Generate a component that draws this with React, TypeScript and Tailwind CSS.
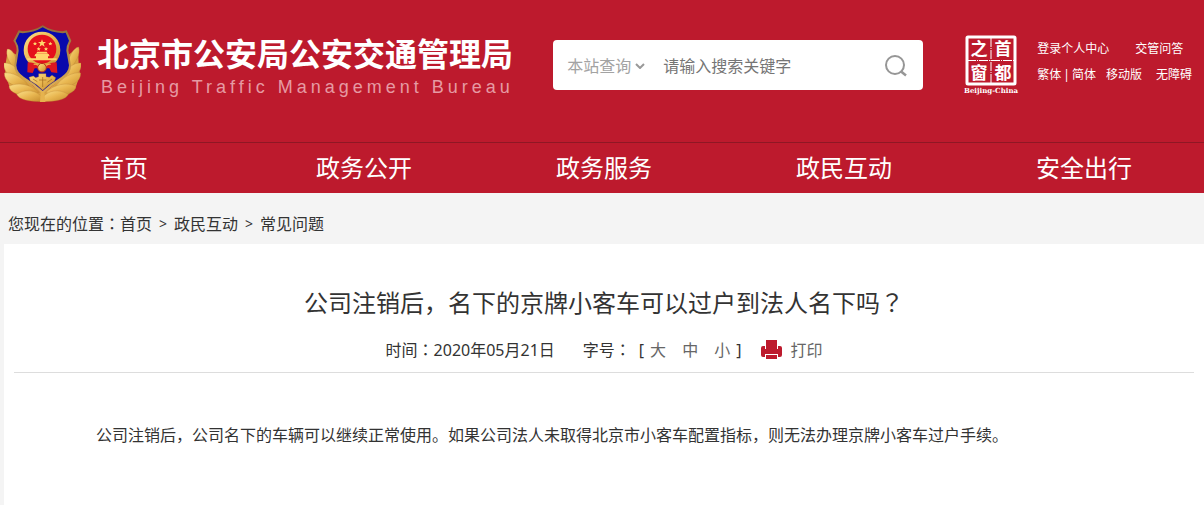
import { useState } from 'react';

const navItems = ['首页', '政务公开', '政务服务', '政民互动', '安全出行'];
const crumbs = ['首页', '政民互动', '常见问题'];
const sizes = ['大', '中', '小'];

function PoliceEmblem() {
  return (
    <svg viewBox="12 30 231 231" className="size-[77px] shrink-0" role="img" aria-label="警徽">
      <defs>
        <linearGradient id="gold" x1="0" y1="0" x2="1" y2="1">
          <stop offset="0" stopColor="#fbe08a" />
          <stop offset="0.5" stopColor="#e8b650" />
          <stop offset="1" stopColor="#c48a2c" />
        </linearGradient>
        <linearGradient id="rim" x1="0" y1="0" x2="0" y2="1">
          <stop offset="0" stopColor="#8d6a3c" />
          <stop offset="1" stopColor="#e4b656" />
        </linearGradient>
      </defs>
      <path d="M24 104 L50 120 L70 190 L128 236 L186 190 L205 120 L234 98 L236 150 L240 180 L226 220 L200 242 L128 259 L56 242 L30 220 L16 178 L16 150Z" fill="#d9a343" />
      <g fill="url(#gold)" stroke="#b98130" strokeWidth="1">
        <path d="M50 166 C26 144 16 120 22 102 C38 102 48 124 54 152Z" />
        <path d="M62 200 C28 186 8 168 12 144 C34 142 56 160 68 188Z" />
        <path d="M78 222 C38 214 12 200 13 174 C38 170 70 188 88 214Z" />
        <path d="M100 240 C62 244 30 236 27 214 C54 200 92 208 118 232Z" />
        <path d="M124 260 C90 260 56 254 50 238 C78 220 110 226 128 248Z" />
        <path d="M205 166 C229 144 242 116 236 96 C220 98 207 124 201 152Z" />
        <path d="M193 200 C227 186 247 168 243 144 C221 142 199 160 187 188Z" />
        <path d="M177 222 C217 214 243 200 242 174 C217 170 185 188 167 214Z" />
        <path d="M155 240 C193 244 225 236 228 214 C201 200 163 208 137 232Z" />
        <path d="M131 260 C165 260 199 254 205 238 C177 220 145 226 127 248Z" />
      </g>
      <path d="M128 31 Q154 48 188 49 L200 46 L214 77 Q205 90 205 106 L213 151 Q214 176 188 192 Q154 212 128 238 Q102 212 68 192 Q42 176 43 151 L50 106 Q50 90 40 77 L56 46 L68 49 Q102 48 128 31Z" fill="url(#rim)" />
      <path d="M128 37 Q154 53 188 55 L197 53 L207 77 Q199 91 199 107 L207 151 Q206 172 184 186 Q152 205 128 228 Q104 205 72 186 Q50 172 49 151 L56 107 Q56 91 47 77 L59 53 L68 55 Q102 53 128 37Z" fill="#0909ac" />
      <circle cx="126" cy="105" r="55" fill="url(#gold)" />
      <circle cx="126" cy="102" r="43" fill="#e5101b" />
      <g fill="#ffd66b">
        <path d="M126 73 l3 8 9 0 -7 5 3 9 -8 -5 -8 5 3 -9 -7 -5 9 0Z" />
        <path d="M105 80 l2 4 4 0 -3 3 1 4 -4 -2 -4 2 1 -4 -3 -3 4 0Z" />
        <path d="M151 80 l2 4 4 0 -3 3 1 4 -4 -2 -4 2 1 -4 -3 -3 4 0Z" />
        <path d="M116 96 l2 4 4 0 -3 3 1 4 -4 -2 -4 2 1 -4 -3 -3 4 0Z" />
        <path d="M138 96 l2 4 4 0 -3 3 1 4 -4 -2 -4 2 1 -4 -3 -3 4 0Z" />
        <path d="M112 110 H140 L144 116 H108Z M106 117 H146 L149 124 H144 V130 H170 V136 H82 V130 H108 V124 H103Z" />
      </g>
      <path d="M83 142 Q104 142 112 150 H140 Q150 142 170 142 L172 174 L154 172 L148 160 H104 L98 174 L82 172Z" fill="#dc1721" />
      <path d="M101 148 Q112 146 116 154 H137 Q142 146 152 148" fill="none" stroke="#f0b245" strokeWidth="4" />
      <circle cx="126" cy="158" r="13" fill="url(#gold)" stroke="#b52418" strokeWidth="3" />
      <path d="M87 187 L100 183 L107 188 L116 185 V176 H138 V185 L148 187 L156 181 L167 188 L163 198 Q143 210 128 226 Q112 208 91 197Z" fill="url(#gold)" stroke="#b87d24" />
      <path d="M99 192 L112 200 M156 192 L142 202 M128 186 V216 M117 195 H139" stroke="#9d671b" strokeWidth="2" />
      <path d="M122 232 L133 232 L136 261 H120Z" fill="#e6b34e" />
    </svg>
  );
}

function CapitalWindowLogo() {
  return (
    <svg viewBox="0 0 58 60" className="h-[60px] w-[58px]" role="img" aria-label="首都之窗">
      <rect x="4" y="2" width="48" height="47" rx="1" fill="none" stroke="#fff" strokeWidth="3" />
      <path d="M28 3 V49 M4 25.500 H52" stroke="#fff" strokeWidth="1" strokeDasharray="9 1 1 1" />
      <g fill="#fff" fontFamily="'Noto Sans CJK SC', sans-serif" fontSize="17" fontWeight="700" textAnchor="middle">
        <text x="16" y="20">之</text>
        <text x="40" y="20">首</text>
        <text x="16" y="44">窗</text>
        <text x="40" y="44">都</text>
      </g>
      <text x="28" y="58" fill="#fff" fontFamily="'DejaVu Serif', serif" fontSize="7" fontWeight="700" textAnchor="middle">
        Beijing-China
      </text>
    </svg>
  );
}

function SearchBox() {
  return (
    <form
      className="flex h-[50px] w-[370px] shrink-0 items-center rounded-[4px] bg-white pt-0.5 pr-4 pl-3.5 text-base"
      onSubmit={(e) => e.preventDefault()}
    >
      <div className="relative flex items-center">
        <select aria-label="查询范围" className="w-20 appearance-none bg-transparent text-[#a3a3a3] outline-none">
          <option>本站查询</option>
        </select>
        <svg viewBox="0 0 10 6" className="pointer-events-none absolute right-0.5 h-1.5 w-2.5" fill="none" stroke="#999" strokeWidth="2">
          <path d="M1 1 L5 5 L9 1" />
        </svg>
      </div>
      <input
        type="text"
        aria-label="搜索关键字"
        placeholder="请输入搜索关键字"
        className="ml-4 min-w-0 flex-1 bg-transparent outline-none placeholder:text-[#757575]"
      />
      <button type="submit" aria-label="搜索">
        <svg viewBox="0 0 22 22" className="size-[22px]" fill="none" stroke="#969696" strokeWidth="2">
          <circle cx="10" cy="10" r="9" />
          <path d="M15.500 16 L21 20.500" strokeWidth="2.500" />
        </svg>
      </button>
    </form>
  );
}

/* Full-width punctuation set in the middle of its cell */
function Mark({ children }: { children: string }) {
  return <span className="font-['Noto_Sans_CJK_TC',sans-serif]">{children}</span>;
}

export default function App() {
  const [size, setSize] = useState('中');
  const bodySize = size === '大' ? 'text-lg' : size === '小' ? 'text-sm' : 'text-base';
  return (
    <div className="min-h-screen bg-[#f4f4f4] font-['Noto_Sans','Noto_Sans_CJK_SC',sans-serif] text-[#333]">
      <header className="bg-[#bd1a2d] text-white">
        <div className="flex h-[142px] items-start pt-[25px] pr-3 pl-1">
          <PoliceEmblem />
          <div className="ml-4 shrink-0 pt-2">
            <h1 className="text-[32px] leading-[42px] font-bold">北京市公安局公安交通管理局</h1>
            <p className="pl-1 font-['Liberation_Sans',sans-serif] text-lg leading-6 tracking-[4px] text-[#e69aa3]">
              Beijing Traffic Management Bureau
            </p>
          </div>
          <div className="ml-auto flex items-start">
            <div className="pt-[15px]">
              <SearchBox />
            </div>
            <a href="#capital" className="ml-10 shrink-0 pt-2.5">
              <CapitalWindowLogo />
            </a>
            <div className="ml-4 flex shrink-0 flex-col gap-2 pt-[15px] text-xs leading-[18px]">
              <div className="flex gap-[26px]">
                <a href="#login">登录个人中心</a>
                <a href="#qa">交管问答</a>
              </div>
              <div className="flex">
                <a href="#traditional">繁体</a>
                <span className="px-0.5">|</span>
                <a href="#simplified">简体</a>
                <a href="#mobile" className="ml-2.5">移动版</a>
                <a href="#accessible" className="ml-3.5">无障碍</a>
              </div>
            </div>
          </div>
        </div>
        <nav className="grid h-[51px] grid-cols-5 border-t border-[#8f1724] pl-1 text-center text-2xl leading-[50px]">
          {navItems.map((item) => (
            <a key={item} href={`#${item}`}>{item}</a>
          ))}
        </nav>
      </header>

      <nav aria-label="您现在的位置" className="flex h-[51px] items-center pt-2.5 pl-2 text-base">
        <span>您现在的位置<Mark>：</Mark></span>
        {crumbs.map((c, i) => (
          <span key={c} className="flex items-center">
            {i > 0 && <span className="px-[7px] text-sm">&gt;</span>}
            <a href={`#${c}`}>{c}</a>
          </span>
        ))}
      </nav>

      <main className="ml-1 min-h-[261px] bg-white px-2.5 pt-[38px]">
        <h2 className="text-center text-2xl leading-10">公司注销后，名下的京牌小客车可以过户到法人名下吗<Mark>？</Mark></h2>
        <div className="flex h-[50px] items-center justify-center border-b border-[#ddd] pt-1">
          <span>时间<Mark>：</Mark>2020年05月21日</span>
          <span className="ml-7">字号<Mark>：</Mark></span>
          <span className="ml-2 flex items-center">
            <span>[</span>
            <span className="flex gap-4 px-1.5 text-[#666]">
              {sizes.map((s) => (
                <button key={s} type="button" onClick={() => setSize(s)}>{s}</button>
              ))}
            </span>
            <span>]</span>
          </span>
          <button type="button" className="ml-5 flex items-center gap-2 text-[#666]" onClick={() => window.print()}>
            <svg viewBox="0 0 21 19" className="h-[19px] w-[21px]" fill="#bd1a2d" aria-hidden="true">
              <path d="M5 0 H16 V6 H5Z" />
              <path d="M2 6 H4 V9 H17 V6 H19 Q21 6 21 8 V15 Q21 17 19 17 H17 V14 H4 V17 H2 Q0 17 0 15 V8 Q0 6 2 6Z" />
              <path d="M5 6 H16 V9 H5Z M5 15 H16 V19 H5Z" />
            </svg>
            <span>打印</span>
          </button>
        </div>
        <p className={`${bodySize} px-[82px] pt-[46px] leading-8`}>
          公司注销后，公司名下的车辆可以继续正常使用。如果公司法人未取得北京市小客车配置指标，则无法办理京牌小客车过户手续。
        </p>
      </main>
    </div>
  );
}
